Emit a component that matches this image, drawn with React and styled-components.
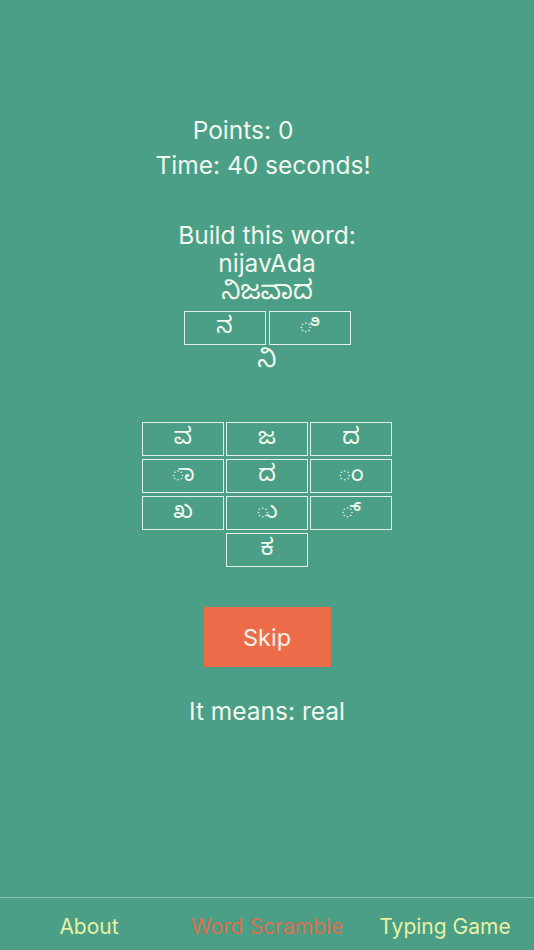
import styled, { createGlobalStyle } from "styled-components";

const built = ["ನ", "ಿ"];
const tiles = ["ವ", "ಜ", "ದ", "ಾ", "ದ", "ಂ", "ಖ", "ು", "್", "ಕ"];
const tabs = [
  { label: "About" },
  { label: "Word Scramble", active: true },
  { label: "Typing Game" },
];

function App() {
  return (
    <Page>
      <GlobalStyle />
      <Main>
        <Line shift={48}>Points: 0</Line>
        <Line shift={8} gap={7}>Time: 40 seconds!</Line>
        <Line gap={42}>Build this word:</Line>
        <Line>nijavAda</Line>
        <Line kannada>ನಿಜವಾದ</Line>
        <BuiltRow>
          {built.map((c, i) => (
            <Tile key={i}>{c}</Tile>
          ))}
        </BuiltRow>
        <Line kannada>ನಿ</Line>
        <Grid>
          {tiles.map((c, i) => (
            <Tile key={i} center={i === 9}>
              {c}
            </Tile>
          ))}
        </Grid>
        <SkipButton>Skip</SkipButton>
        <Line gap={30}>It means: real</Line>
      </Main>
      <TabBar>
        {tabs.map((t) => (
          <Tab key={t.label} active={t.active}>
            {t.label}
          </Tab>
        ))}
      </TabBar>
    </Page>
  );
}

export default App;

const kannadaFont = `"Liberation Sans", "Noto Sans Kannada", "Noto Sans", sans-serif`;

const GlobalStyle = createGlobalStyle`
  body {
    margin: 0;
    background: #4a9f86;
    font-family: Inter, "Liberation Sans", sans-serif;
  }
`;

const Page = styled.div`
  min-height: 100vh;
  display: flex;
  flex-direction: column;
  color: #f2f7ee;
`;

const Main = styled.div`
  flex: 1;
  display: flex;
  flex-direction: column;
  align-items: center;
  padding-top: 116px;
`;

const Line = styled.div`
  font-family: ${(p) => (p.kannada ? kannadaFont : "inherit")};
  font-size: ${(p) => (p.kannada ? "26px" : "24.5px")};
  line-height: ${(p) => (p.kannada ? "26px" : "28px")};
  margin-top: ${(p) => p.gap || 0}px;
  padding-right: ${(p) => p.shift || 0}px;
  white-space: nowrap;
`;

const BuiltRow = styled.div`
  display: flex;
  gap: 3px;
  margin-top: 8px;
`;

const Tile = styled.div`
  box-sizing: border-box;
  width: 82px;
  height: 34px;
  border: 1.5px solid #e4efe8;
  font-family: ${kannadaFont};
  font-size: 23px;
  line-height: 26px;
  text-align: center;
  grid-column: ${(p) => (p.center ? "2" : "auto")};
`;

const Grid = styled.div`
  display: grid;
  grid-template-columns: repeat(3, 82px);
  gap: 3px 2px;
  margin-top: 51px;
`;

const SkipButton = styled.button`
  margin-top: 40px;
  width: 127px;
  height: 60px;
  border: none;
  background: #ec6b48;
  color: #f6f2ea;
  font-family: inherit;
  font-size: 23.5px;
`;

const TabBar = styled.div`
  height: 52px;
  border-top: 1px solid #8fc4b4;
  display: grid;
  grid-template-columns: repeat(3, 1fr);
  align-items: center;
`;

const Tab = styled.div`
  text-align: center;
  font-size: 21px;
  color: ${(p) => (p.active ? "#d9704f" : "#e8f1a4")};
  padding-top: 4px;
`;
